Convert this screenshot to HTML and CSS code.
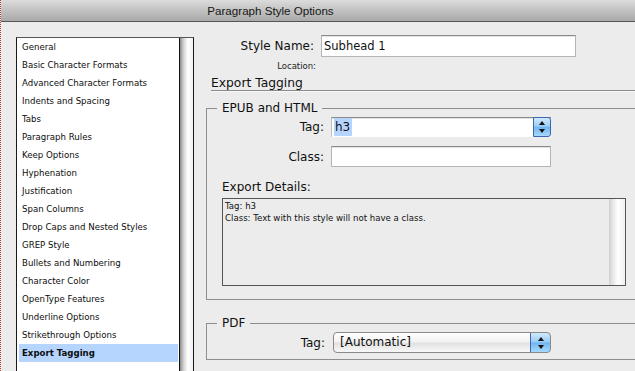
FILE: index.html
```html
<!DOCTYPE html>
<html>
<head>
<meta charset="utf-8">
<title>Paragraph Style Options</title>
<link rel="stylesheet" href="styles.css">
</head>
<body>
<div class="window">
  <div class="titlebar"><span class="title">Paragraph Style Options</span></div>
  <div class="main">
    <div class="sidebar">
      <ul class="list">
        <li>General</li>
        <li>Basic Character Formats</li>
        <li>Advanced Character Formats</li>
        <li>Indents and Spacing</li>
        <li>Tabs</li>
        <li>Paragraph Rules</li>
        <li>Keep Options</li>
        <li>Hyphenation</li>
        <li>Justification</li>
        <li>Span Columns</li>
        <li>Drop Caps and Nested Styles</li>
        <li>GREP Style</li>
        <li>Bullets and Numbering</li>
        <li>Character Color</li>
        <li>OpenType Features</li>
        <li>Underline Options</li>
        <li>Strikethrough Options</li>
        <li class="selected">Export Tagging</li>
      </ul>
      <div class="vscroll"></div>
    </div>
    <div class="panel">
      <div class="name-row">
        <span class="label">Style Name:</span>
        <div class="textfield name-field">Subhead 1</div>
      </div>
      <div class="location">Location:</div>
      <div class="section-title">Export Tagging</div>
      <fieldset class="group epub">
        <legend>EPUB and HTML</legend>
        <div class="form-row tag-row">
          <span class="label">Tag:</span>
          <div class="combo">
            <span class="combo-text"><span class="sel">h3</span></span>
            <span class="stepper">
              <svg width="8" height="14" viewBox="0 0 8 14"><path d="M4 1 L7 5 L1 5 Z" fill="#111"/><path d="M1 9 L7 9 L4 13 Z" fill="#111"/></svg>
            </span>
          </div>
        </div>
        <div class="form-row class-row">
          <span class="label">Class:</span>
          <div class="textfield class-field"></div>
        </div>
        <div class="details-label">Export Details:</div>
        <div class="details">
          <div class="details-text">
            <div>Tag: h3</div>
            <div>Class: Text with this style will not have a class.</div>
          </div>
          <div class="details-scroll"></div>
        </div>
      </fieldset>
      <fieldset class="group pdf">
        <legend>PDF</legend>
        <div class="form-row pdf-row">
          <span class="label">Tag:</span>
          <div class="popup">
            <span class="popup-text">[Automatic]</span>
            <span class="stepper popup-stepper">
              <svg width="8" height="14" viewBox="0 0 8 14"><path d="M4 1 L7 5 L1 5 Z" fill="#111"/><path d="M1 9 L7 9 L4 13 Z" fill="#111"/></svg>
            </span>
          </div>
        </div>
      </fieldset>
    </div>
  </div>
</div>
</body>
</html>
```

FILE: styles.css
```css
html, body {
  margin: 0;
  padding: 0;
}
body {
  width: 635px;
  height: 371px;
  overflow: hidden;
  background: #ececec;
  font-family: "DejaVu Sans", "Liberation Sans", sans-serif;
  color: #111;
}
.window {
  width: 634px;
  height: 371px;
  border-left: 1px dotted #b63a2e;
  overflow: hidden;
  background: #ececec;
}
.titlebar {
  height: 21px;
  border-bottom: 1px solid #555;
  background: linear-gradient(#dcdcdc, #c4c4c4 45%, #a9a9a9);
  display: flex;
  align-items: center;
  justify-content: center;
  padding-right: 95px;
}
.title {
  font-family: "Liberation Sans", Arial, sans-serif;
  font-size: 11.6px;
  color: #151515;
}
.main {
  display: flex;
  align-items: flex-start;
}
.sidebar {
  margin-left: 15px;
  margin-top: 15px;
  width: 178px;
  height: 345px;
  box-sizing: border-box;
  border: 1px solid #1a1a1a;
  border-top-color: #555;
  background: #fff;
  display: flex;
  flex: none;
}
.list {
  list-style: none;
  margin: 0;
  padding: 0;
  width: 162px;
  font-size: 8.6px;
}
.list li {
  height: 18px;
  line-height: 19px;
  padding-left: 3px;
  margin: 0 1px 0 2px;
  white-space: nowrap;
  color: #0d0d0d;
}
.list li.selected {
  background: #b5d5ff;
  font-weight: bold;
}
.vscroll {
  width: 13px;
  border-left: 1px solid #111;
  background: linear-gradient(to right, #8e8e8e 0, #d6d6d6 30%, #fff 60%, #f0f0f0 100%);
}
.panel {
  flex: none;
  width: 445px;
  margin-left: 12px;
  padding-top: 13px;
}
.label {
  font-size: 12px;
  text-align: right;
  white-space: nowrap;
}
.name-row {
  display: grid;
  grid-template-columns: 108px 255px;
  column-gap: 7px;
  align-items: center;
}
.textfield {
  box-sizing: border-box;
  background: #fff;
  border: 1px solid #b4b4b4;
  border-top-color: #8a8a8a;
  box-shadow: inset 0 1px 0 #e4e4e4;
}
.name-field {
  height: 22px;
  line-height: 20px;
  padding-left: 2px;
  font-size: 11.5px;
}
.location {
  width: 110px;
  text-align: right;
  margin-top: 4px;
  font-size: 8.5px;
  line-height: 10px;
  color: #222;
}
.section-title {
  margin-top: 5px;
  margin-left: 5px;
  font-size: 12.3px;
  line-height: 14px;
  border-bottom: 1px solid #8a8a8a;
  box-shadow: 0 1px 0 #f8f8f8;
}
.group {
  margin: 0;
  padding: 0 0 0 15px;
  border: 1px solid #8e8e8e;
  min-inline-size: 0;
}
.group legend {
  font-size: 12px;
  line-height: 14px;
  padding: 0 5px;
  margin-left: -5px;
  color: #111;
}
.epub {
  margin-top: 10px;
  padding-bottom: 13px;
}
.pdf {
  margin-top: 16px;
  padding-bottom: 6px;
}
.form-row {
  display: grid;
  grid-template-columns: 102px 220px;
  column-gap: 7px;
  align-items: center;
}
.tag-row {
  margin-top: 2px;
}
.class-row {
  margin-top: 9px;
}
.combo {
  height: 20px;
  box-sizing: border-box;
  display: flex;
  background: #fff;
  border-top: 1px solid #8a8a8a;
  border-left: 1px solid #c0c0c0;
  box-shadow: inset 0 1px 0 #e4e4e4;
}
.combo-text {
  flex: 1;
  padding-left: 2px;
  font-size: 12px;
  line-height: 18px;
}
.sel {
  background: #b5d5ff;
  padding: 0 2px 0 1px;
  display: inline-block;
  line-height: 18px;
}
.stepper {
  width: 18px;
  box-sizing: border-box;
  margin-top: -1px;
  border: 1px solid #3d66b0;
  border-radius: 0 3px 3px 0;
  background: linear-gradient(#d2e9fd, #9ccdf7 45%, #72b4f0 52%, #a6dafd);
  display: flex;
  align-items: center;
  justify-content: center;
}
.class-field {
  height: 21px;
}
.details-label {
  margin-top: 13px;
  font-size: 12px;
  line-height: 14px;
}
.details {
  margin-top: 4px;
  width: 404px;
  height: 88px;
  box-sizing: border-box;
  border: 1px solid #555;
  display: flex;
  background: #ececec;
}
.details-text {
  flex: 1;
  padding: 1px 0 0 2px;
  font-size: 8.6px;
  line-height: 12px;
  color: #111;
}
.details-scroll {
  width: 16px;
  background: linear-gradient(to right, #cfcfcf 0, #e8e8e8 25%, #fff 55%, #f0f0f0 100%);
}
.pdf-row {
  grid-template-columns: 103px 218px;
  column-gap: 8px;
  margin-top: 2px;
}
.popup {
  height: 21px;
  box-sizing: border-box;
  display: flex;
  border: 1px solid #8a8a8a;
  border-radius: 4px;
  background: linear-gradient(#ffffff, #f2f2f2 45%, #e2e2e2 55%, #f8f8f8);
  overflow: hidden;
}
.popup-text {
  flex: 1;
  padding-left: 6px;
  font-size: 12px;
  line-height: 19px;
}
.popup-stepper {
  margin: -1px -1px -1px 0;
  width: 21px;
  border-radius: 0 4px 4px 0;
}
```
